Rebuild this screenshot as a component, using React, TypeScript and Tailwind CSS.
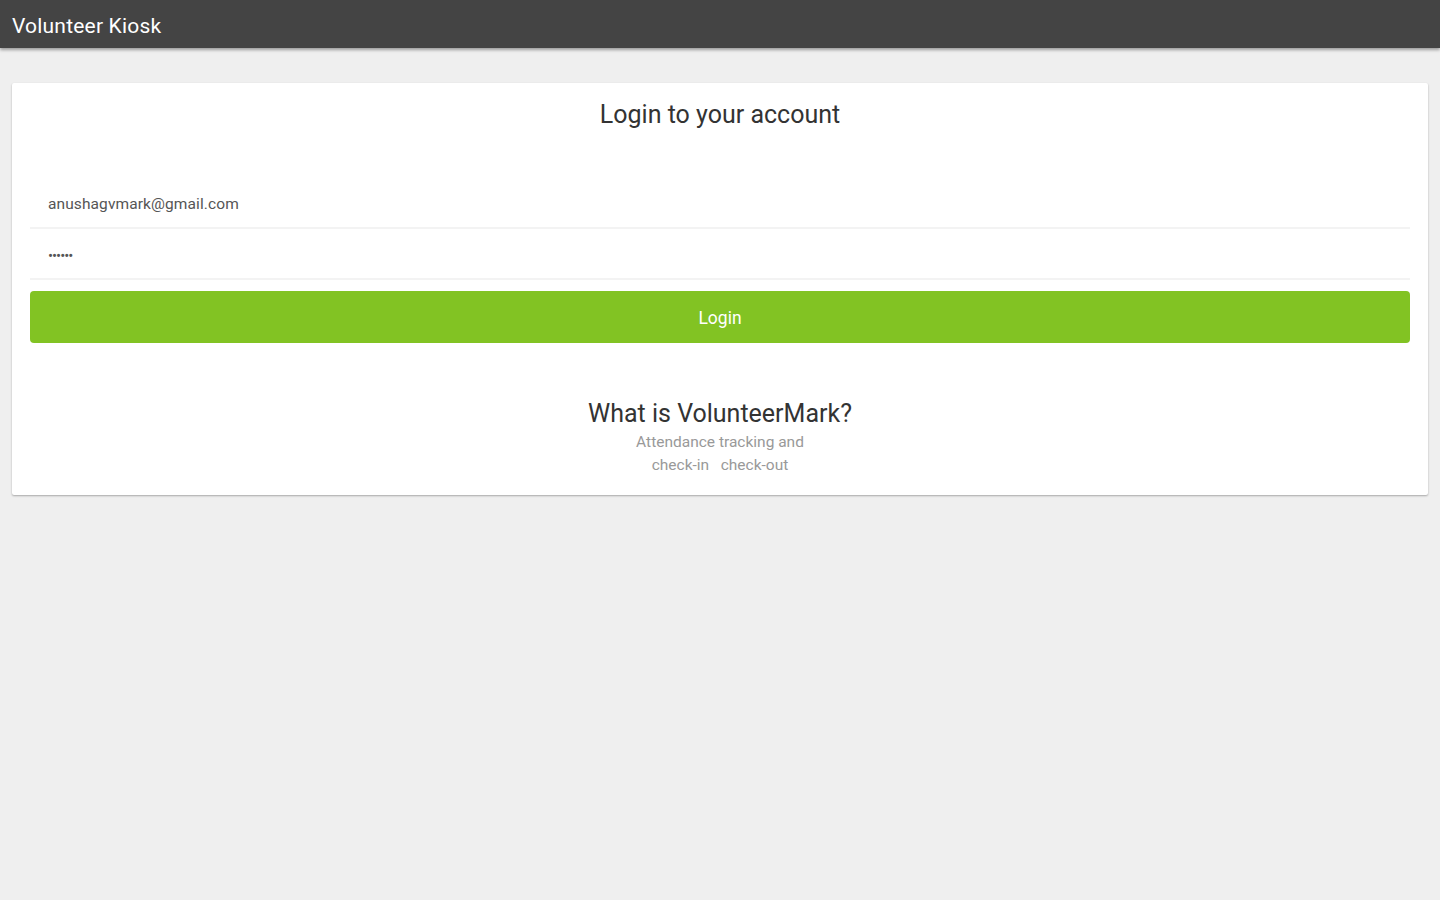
export default function App() {
  return (
    <div className="min-h-screen bg-[#efefef]" style={{ fontFamily: "Roboto, 'Liberation Sans', sans-serif" }}>
      {/* Toolbar */}
      <div className="h-12 bg-[#444444] flex items-center px-3 pt-[5px] shadow-[0_2px_3px_rgba(0,0,0,0.35)]">
        <span className="text-white text-[21px] tracking-[0.2px]">Volunteer Kiosk</span>
      </div>

      <div className="px-3 pt-[35px]">
        <div className="bg-white rounded-[2px] shadow-[0_1px_2px_rgba(0,0,0,0.3)] px-[18px] pt-[14px] pb-[18px]">
          <h1 className="text-center text-[25px] text-[#333333] leading-[36px]">Login to your account</h1>

          <div className="mt-[50px]">
            <div className="h-[46px] flex items-center px-[18px] border-b-2 border-[#f3f3f3]">
              <span className="text-[15.5px] text-[#555555] tracking-[0.1px]">anushagvmark@gmail.com</span>
            </div>
            <div className="h-[51px] flex items-center px-[18px] pt-[5px] border-b-2 border-[#f3f3f3]">
              <span className="text-[15px] text-[#555555] tracking-[-1px]">••••••</span>
            </div>
          </div>

          <button className="mt-[11px] w-full h-[52px] rounded-[4px] bg-[#82c323] text-white text-[17.5px] pt-[3px]">
            Login
          </button>

          <div className="mt-[55px] text-center">
            <h2 className="text-[25px] text-[#333333] leading-[32px]">What is VolunteerMark?</h2>
            <p className="text-[15.5px] text-[#999999] leading-[23px] mt-[1px]">
              Attendance tracking and
              <br />
              check-in &nbsp; check-out
            </p>
          </div>
        </div>
      </div>
    </div>
  );
}
